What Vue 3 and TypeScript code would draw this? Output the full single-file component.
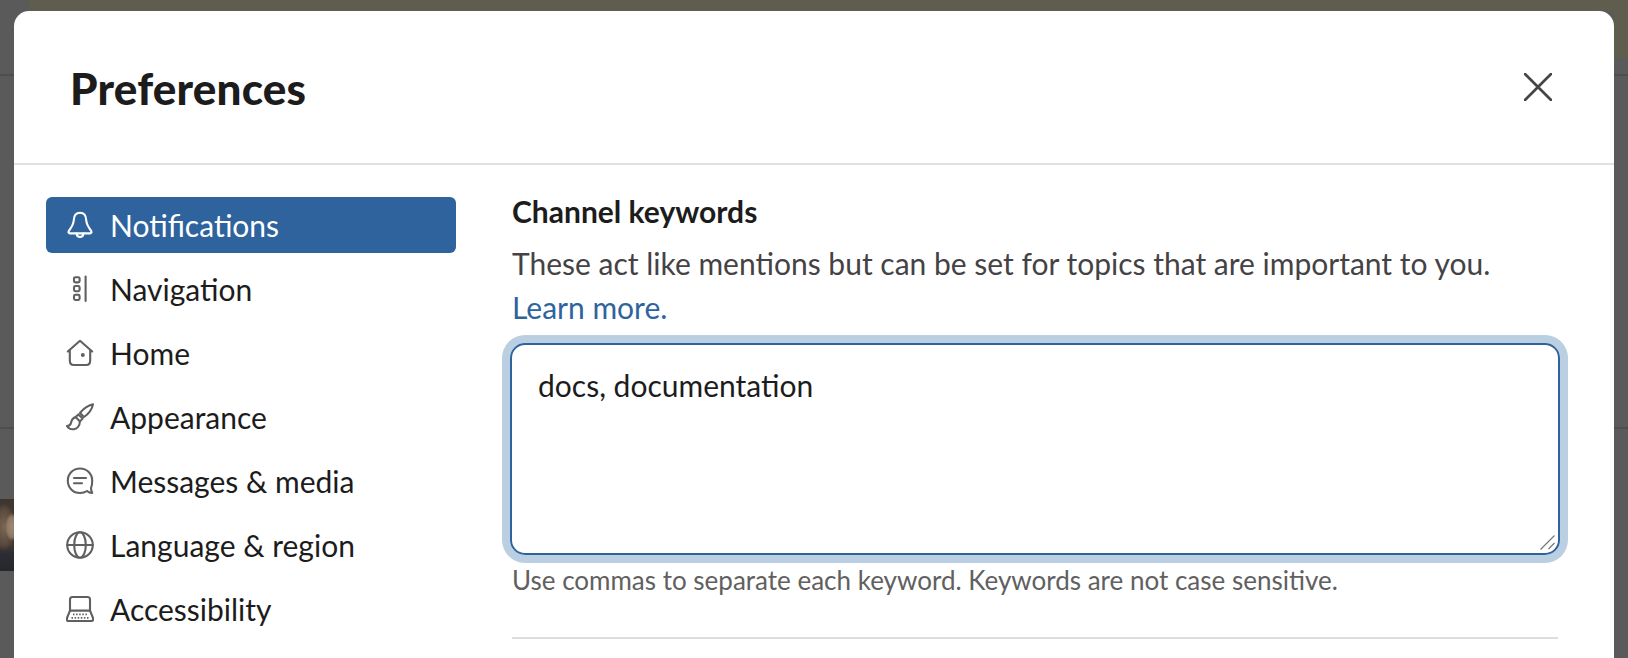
<script setup lang="ts">
interface NavItem {
  label: string
  icon: string
  active?: boolean
}

const items: NavItem[] = [
  { label: 'Notifications', icon: 'bell', active: true },
  { label: 'Navigation', icon: 'nav' },
  { label: 'Home', icon: 'home' },
  { label: 'Appearance', icon: 'brush' },
  { label: 'Messages & media', icon: 'msg' },
  { label: 'Language & region', icon: 'globe' },
  { label: 'Accessibility', icon: 'keyboard' },
]
</script>

<template>
  <div class="page">
    <div class="backdrop">
      <div class="band-top"></div>
      <div class="band-right"></div>
      <div class="line line-a"></div>
      <div class="line line-b"></div>
      <div class="photo"></div>
    </div>
    <div class="modal">
      <header class="head">
        <h1 class="title">Preferences</h1>
        <button class="close" type="button" aria-label="Close">
          <svg width="28" height="28" viewBox="0 0 28 28" fill="none">
            <path d="M1 1 L27 27 M27 1 L1 27" stroke="#454547" stroke-width="2.7" stroke-linecap="round" />
          </svg>
        </button>
      </header>
      <div class="body">
        <nav class="nav">
          <div v-for="item in items" :key="item.label" class="nav-item" :class="{ active: item.active }">
            <svg class="icon" width="28" height="28" viewBox="0 0 28 28" fill="none" stroke="currentColor" stroke-width="2.1" stroke-linecap="round" stroke-linejoin="round">
              <template v-if="item.icon === 'bell'">
                <path d="M14 1.8 C9.8 1.8 8 5 7.8 9 C7.6 13.5 5.8 16 2.8 20 C2 21.2 2.6 22.4 4 22.4 H24 C25.4 22.4 26 21.2 25.2 20 C22.2 16 20.4 13.5 20.2 9 C20 5 18.2 1.8 14 1.8 Z" />
                <path d="M10.6 22.6 C10.8 25 12.2 26 14 26 C15.8 26 17.2 25 17.4 22.6" />
              </template>
              <template v-else-if="item.icon === 'nav'">
                <rect x="8" y="2.2" width="5.6" height="5.2" rx="1.4" />
                <rect x="8" y="11" width="5.6" height="5.2" rx="1.4" />
                <rect x="8" y="19.8" width="5.6" height="5.2" rx="1.4" />
                <path d="M19.6 1.5 V26" />
              </template>
              <template v-else-if="item.icon === 'home'">
                <path d="M1.8 12.5 L14 1.8 L26.2 12.5" />
                <path d="M3.8 11 V21.5 C3.8 24.4 5 26 7.8 26 H20.2 C23 26 24.2 24.4 24.2 21.5 V11" />
                <circle cx="16.8" cy="16" r="2" fill="currentColor" stroke="none" />
              </template>
              <template v-else-if="item.icon === 'brush'">
                <path d="M27 1.2 C22 2.4 17.5 5.5 14 10 L18 14 C22.5 11 26 6.5 27 1.2 Z" />
                <path d="M12.4 11.4 L16.6 15.6 L14 18.4 L9.6 14 Z" />
                <path d="M9.4 14.4 C5.8 15 5.6 18 5 20 C4.6 21.8 3 22.8 1 23 C2.5 25.6 5 26.6 8 26.2 C11.5 25.6 13.8 22.5 13.8 18.8" />
              </template>
              <template v-else-if="item.icon === 'msg'">
                <path d="M14 1.5 C7 1.5 1.8 7 1.8 13.8 C1.8 20.6 7 26 14 26 C16.5 26 19 25.4 21 24 C22.5 25.4 24.5 26 26.2 26 C25.4 24.6 25 22.8 25 21 C26 19.2 26.2 16 26.2 13.8 C26.2 7 21 1.5 14 1.5 Z" />
                <path d="M8 11 H20 M8 16.2 H16" />
              </template>
              <template v-else-if="item.icon === 'globe'">
                <circle cx="14" cy="14" r="12.8" />
                <ellipse cx="14" cy="14" rx="5.8" ry="12.8" />
                <path d="M1.2 14 H26.8" />
              </template>
              <template v-else>
                <path d="M4 16 V4.5 C4 3 5 2 6.5 2 H21.5 C23 2 24 3 24 4.5 V16" />
                <path d="M4 15.6 H24 L27 23 V25 C27 25.6 26.5 26 26 26 H2 C1.5 26 1 25.6 1 25 V23 Z" />
                <path d="M7 19.3 H21 M5.5 22.8 H22.5" stroke-width="1.7" stroke-dasharray="1.5 1.6" stroke-linecap="butt" />
              </template>
            </svg>
            <span class="label">{{ item.label }}</span>
          </div>
        </nav>
        <main class="content">
          <h2 class="section-title">Channel keywords</h2>
          <p class="desc">These <span class="plain">act</span> like mentions but can be set for topics that are important to you.</p>
          <a class="learn" href="#">Learn more.</a>
          <div class="field">
            <div class="field-text">docs, documentation</div>
            <svg class="grip" width="15" height="15" viewBox="0 0 15 15" fill="none">
              <path d="M0.5 14.5 L14.5 0.5 M8.5 14 L14.5 8" stroke="#767676" stroke-width="1.2" />
            </svg>
          </div>
          <p class="hint">Use commas to separate <span class="plain">each</span> keyword. Keywords are not case sensitive.</p>
          <div class="rule"></div>
        </main>
      </div>
    </div>
  </div>
</template>

<style>
html, body { margin: 0; padding: 0; background: #5a5a5a; }
</style>

<style scoped>
.page {
  position: relative;
  width: 1628px;
  height: 658px;
  overflow: hidden;
  background: #5a5a5a;
  font-family: Lato, "Liberation Sans", sans-serif;
  font-feature-settings: "liga" 1, "dlig" 1;
}
.plain { font-feature-settings: "liga" 1, "dlig" 0; }
.backdrop { position: absolute; inset: 0; }
.band-top {
  position: absolute;
  left: 29px;
  right: 0;
  top: 0;
  height: 11px;
  background: #5f5d4e;
}
.band-right {
  position: absolute;
  right: 0;
  top: 0;
  width: 14px;
  height: 58px;
  background: #5f5d4e;
}
.line {
  position: absolute;
  left: 0;
  right: 0;
  height: 2px;
  background: #4e4e4e;
}
.line-a { top: 74px; }
.line-b { top: 427px; }
.photo {
  position: absolute;
  left: 0;
  top: 499px;
  width: 14px;
  height: 72px;
  background:
    radial-gradient(ellipse 7px 14px at 12px 28px, #9e8a74 0%, #8d7864 70%, transparent 100%),
    radial-gradient(ellipse 12px 24px at 4px 28px, #7a6753 0%, #5c4c3f 70%, transparent 100%),
    linear-gradient(180deg, #3f352f 0%, #463a32 62%, #2c2d34 76%, #26272d 100%);
}
.modal {
  position: absolute;
  left: 14px;
  top: 11px;
  width: 1600px;
  height: 660px;
  background: #fff;
  border-radius: 15px 15px 0 0;
  display: flex;
  flex-direction: column;
}
.head {
  height: 152px;
  flex: none;
  border-bottom: 2px solid #e1e1e1;
  display: flex;
  align-items: center;
  justify-content: space-between;
  padding: 0 62px 0 56px;
}
.title {
  margin: 2px 0 0;
  font-size: 44px;
  line-height: 56px;
  font-weight: 900;
  letter-spacing: 0.2px;
  color: #1d1c1d;
}
.close {
  border: 0;
  background: none;
  padding: 0;
  width: 28px;
  height: 28px;
  display: block;
}
.body {
  display: flex;
  padding: 32px 0 0 32px;
}
.nav {
  width: 410px;
  flex: none;
  display: flex;
  flex-direction: column;
  gap: 8px;
}
.nav-item {
  height: 56px;
  border-radius: 6px;
  display: flex;
  align-items: center;
  padding-left: 20px;
  color: #616061;
}
.nav-item .label {
  font-size: 30px;
  line-height: 56px;
  margin-left: 16px;
  color: #1d1c1d;
}
.nav-item.active {
  background: #2e639e;
  color: #fff;
}
.nav-item.active .label { color: #fff; }
.icon { flex: none; }
.content {
  margin-left: 56px;
  width: 1046px;
}
.section-title {
  margin: 0;
  font-size: 30px;
  line-height: 28px;
  font-weight: 700;
  color: #1d1c1d;
}
.desc {
  margin: 16px 0 0;
  font-size: 30px;
  line-height: 44px;
  color: #454245;
}
.learn {
  display: block;
  font-size: 30px;
  line-height: 44px;
  color: #2e639e;
  text-decoration: none;
}
.field {
  position: relative;
  height: 212px;
  margin: 14px -2px 0 -2px;
  box-sizing: border-box;
  border: 2px solid #2e639e;
  border-radius: 15px;
  box-shadow: 0 0 0 8px #bacfe1;
  padding: 22px 26px;
}
.field-text {
  font-size: 30px;
  line-height: 36px;
  color: #1d1c1d;
}
.grip { position: absolute; right: 3px; bottom: 3px; }
.hint {
  margin: 10px 0 0;
  font-size: 26px;
  line-height: 30px;
  color: #616061;
}
.rule {
  margin-top: 42px;
  height: 2px;
  background: #dddddd;
}
</style>
